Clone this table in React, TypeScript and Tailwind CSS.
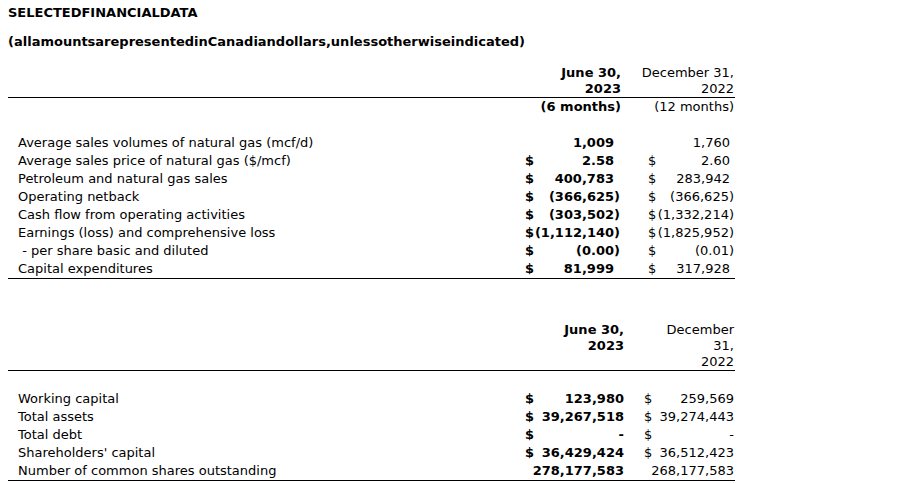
import React from "react";

type Row1 = { label: string; d1?: boolean; v1: string; p1?: boolean; d2?: boolean; v2: string; p2?: boolean };

const rows1: Row1[] = [
  { label: "Average sales volumes of natural gas (mcf/d)", v1: "1,009", v2: "1,760" },
  { label: "Average sales price of natural gas ($/mcf)", d1: true, v1: "2.58", d2: true, v2: "2.60" },
  { label: "Petroleum and natural gas sales", d1: true, v1: "400,783", d2: true, v2: "283,942" },
  { label: "Operating netback", d1: true, v1: "(366,625)", p1: true, d2: true, v2: "(366,625)", p2: true },
  { label: "Cash flow from operating activities", d1: true, v1: "(303,502)", p1: true, d2: true, v2: "(1,332,214)", p2: true },
  { label: "Earnings (loss) and comprehensive loss", d1: true, v1: "(1,112,140)", p1: true, d2: true, v2: "(1,825,952)", p2: true },
  { label: " - per share basic and diluted", d1: true, v1: "(0.00)", p1: true, d2: true, v2: "(0.01)", p2: true },
  { label: "Capital expenditures", d1: true, v1: "81,999", d2: true, v2: "317,928" },
];

const rows2 = [
  { label: "Working capital", d1: true, v1: "123,980", d2: true, v2: "259,569" },
  { label: "Total assets", d1: true, v1: "39,267,518", d2: true, v2: "39,274,443" },
  { label: "Total debt", d1: true, v1: "-", d2: true, v2: "-" },
  { label: "Shareholders' capital", d1: true, v1: "36,429,424", d2: true, v2: "36,512,423" },
  { label: "Number of common shares outstanding", d1: false, v1: "278,177,583", d2: false, v2: "268,177,583" },
];

export default function App() {
  return (
    <div
      className="w-[911px] h-[483px] bg-white text-black pl-[8px] text-[13px]"
      style={{ fontFamily: '"DejaVu Sans", Verdana, sans-serif' }}
    >
      <div className="pt-[4px] h-[22px] leading-[18px] font-bold">SELECTEDFINANCIALDATA</div>
      <div className="mt-[11px] h-[18px] leading-[18px] font-bold">
        (allamountsarepresentedinCanadiandollars,unlessotherwiseindicated)
      </div>

      {/* Table 1 */}
      <div className="mt-[14px] w-[727px]">
        <div className="flex border-b border-black leading-[16px]">
          <div className="w-[517px]" />
          <div className="w-[96px] text-right font-bold">
            <div>June 30,</div>
            <div>2023</div>
          </div>
          <div className="w-[114px] text-right pr-[1px]">
            <div>December 31,</div>
            <div>2022</div>
          </div>
        </div>
        <div className="flex leading-[18px] h-[18px]">
          <div className="w-[517px]" />
          <div className="w-[96px] text-right font-bold">(6 months)</div>
          <div className="w-[114px] text-right pr-[1px]">(12 months)</div>
        </div>
        <div className="h-[18px]" />
        <div className="border-b border-black">
          {rows1.map((r, i) => (
            <div key={i} className="flex leading-[18px] h-[18px]">
              <div className="w-[517px] pl-[10px] whitespace-pre">{r.label}</div>
              <div className="w-[96px] flex justify-between font-bold">
                <span>{r.d1 ? "$" : ""}</span>
                <span className={r.p1 ? "pr-[1px]" : "pr-[7px]"}>{r.v1}</span>
              </div>
              <div className="w-[27px]" />
              <div className="w-[87px] flex justify-between">
                <span>{r.d2 ? "$" : ""}</span>
                <span className={r.p2 ? "pr-[1px]" : "pr-[5px]"}>{r.v2}</span>
              </div>
            </div>
          ))}
        </div>
      </div>

      {/* Table 2 */}
      <div className="mt-[43px] w-[727px]">
        <div className="flex border-b border-black leading-[16px]">
          <div className="w-[517px]" />
          <div className="w-[100px] text-right font-bold pr-[1px]">
            <div>June 30,</div>
            <div>2023</div>
          </div>
          <div className="w-[110px] text-right pr-[1px]">
            <div>December</div>
            <div>31,</div>
            <div>2022</div>
          </div>
        </div>
        <div className="h-[19px]" />
        <div className="border-b border-black">
          {rows2.map((r, i) => (
            <div key={i} className="flex leading-[18px] h-[18px]">
              <div className="w-[517px] pl-[10px]">{r.label}</div>
              <div className="w-[100px] flex justify-between font-bold">
                <span>{r.d1 ? "$" : ""}</span>
                <span className="pr-[1px]">{r.v1}</span>
              </div>
              <div className="w-[19px]" />
              <div className="w-[91px] flex justify-between">
                <span>{r.d2 ? "$" : ""}</span>
                <span className="pr-[1px]">{r.v2}</span>
              </div>
            </div>
          ))}
        </div>
      </div>
    </div>
  );
}
